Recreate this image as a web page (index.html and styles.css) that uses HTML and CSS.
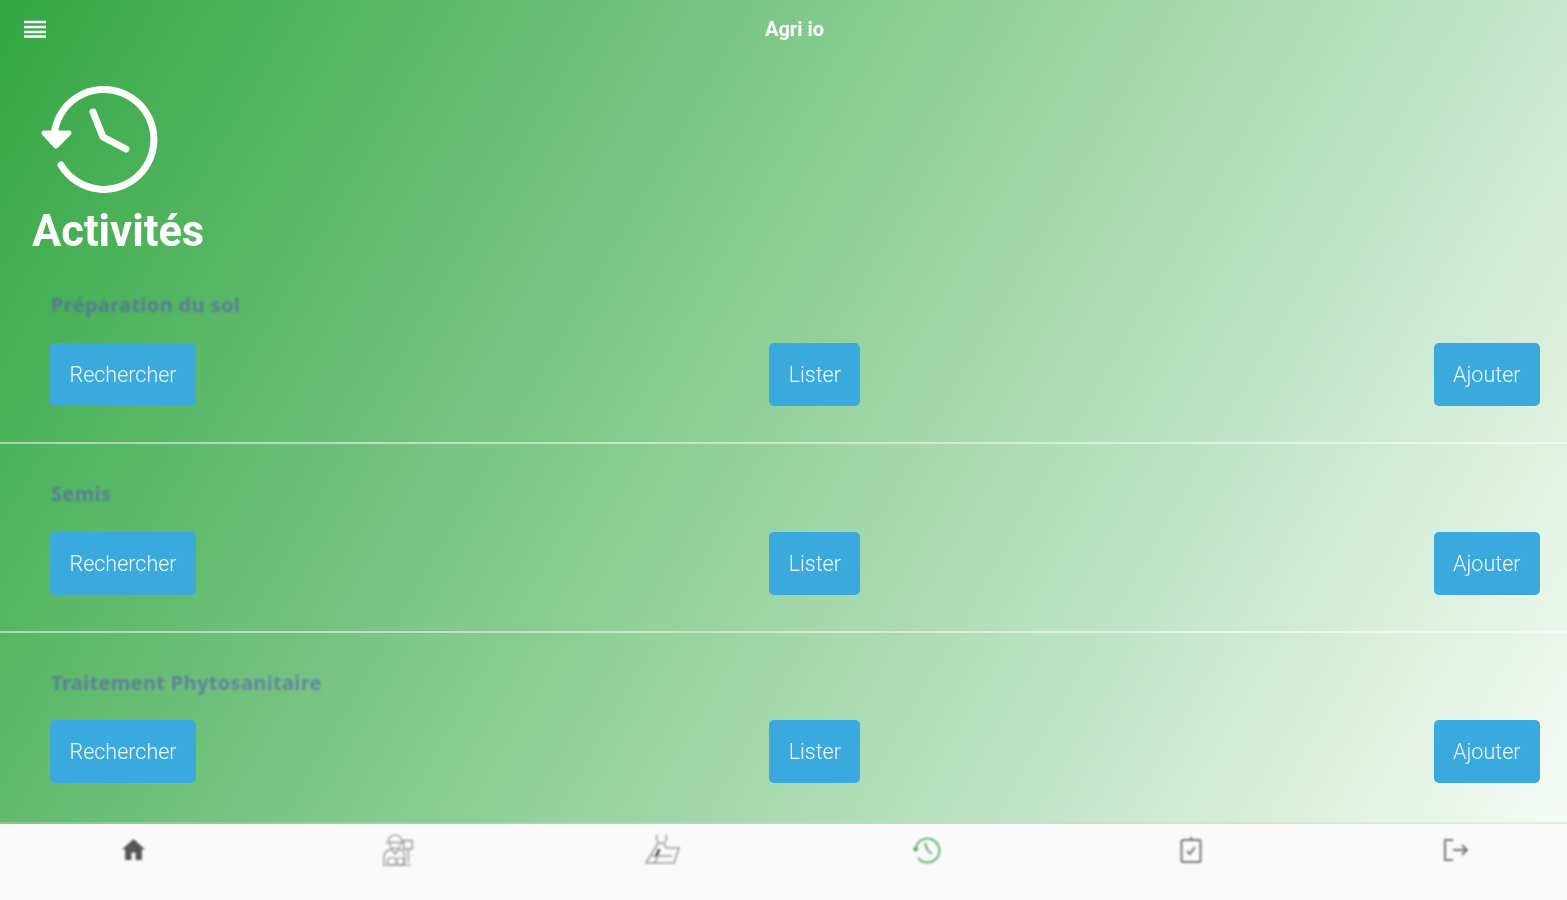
FILE: index.html
```html
<!DOCTYPE html>
<html lang="fr">

<head>
    <meta charset="UTF-8" />
    <title>Agri io</title>
    <link rel="stylesheet" href="styles.css">
</head>

<body>
    <main class="content">
        <header class="topbar">
            <svg class="menu-icon" viewBox="0 0 22 18" aria-hidden="true">
                <path d="M0 2h22M0 7h22M0 12h22M0 16.500h22" />
            </svg>
            <span class="app-title">Agri io</span>
        </header>

        <section class="hero">
            <svg class="hero-icon" viewBox="0 0 124 112" aria-hidden="true">
                <path d="M23 80A50 50 0 1 0 16 52" />
                <path class="arrow" d="M6 48L18 61L31 48Z" />
                <path d="M55 27L65 52L88 64" />
            </svg>
            <h1>Activités</h1>
        </section>

        <section class="activity">
            <h2>Préparation du sol</h2>
            <div class="actions">
                <button>Rechercher</button>
                <button>Lister</button>
                <button>Ajouter</button>
            </div>
        </section>
        <section class="activity">
            <h2>Semis</h2>
            <div class="actions">
                <button>Rechercher</button>
                <button>Lister</button>
                <button>Ajouter</button>
            </div>
        </section>
        <section class="activity last">
            <h2>Traitement Phytosanitaire</h2>
            <div class="actions">
                <button>Rechercher</button>
                <button>Lister</button>
                <button>Ajouter</button>
            </div>
        </section>
    </main>

    <nav class="tabbar">
        <!-- home -->
        <div class="tab">
            <svg class="home" viewBox="0 0 24 24" aria-hidden="true">
                <path d="M12 2L1 12h3v10h6v-7h4v7h6V12h3z" />
            </svg>
        </div>
        <!-- farmer -->
        <div class="tab">
            <svg class="farmer" viewBox="0 0 36 36" aria-hidden="true">
                <path d="M8 9c0-9 14-9 14 0M5 10h20M9 10c0 9 12 9 12 0" />
                <path d="M3 34v-8c0-5 4-8 8-9l4 5 4-5c3 1 5 2 6 4v13z" />
                <path d="M11 26a5 4 0 1 0 1 0M20 26a4 4 0 1 0 1 0" />
                <path d="M24 8h9v9h-9zM29 17v14M26 34h6" />
            </svg>
        </div>
        <!-- field -->
        <div class="tab">
            <svg class="field" viewBox="0 0 36 30" aria-hidden="true">
                <path d="M14 7a5 6 0 1 1 7 0" />
                <path d="M2 28L14 8h6l2 5h13l-5 15H2z" />
                <path d="M8 21h20M16 14l-5 14" />
                <path class="dark" d="M15 14l-3 7" />
            </svg>
        </div>
        <!-- history -->
        <div class="tab">
            <svg class="history" viewBox="0 0 30 30" aria-hidden="true">
                <path d="M6 23A12 12 0 1 0 3.500 14" />
                <path class="arrow" d="M0.500 13L3.500 17L7 13Z" />
                <path d="M13 8L15.500 15L20 19" />
            </svg>
        </div>
        <!-- clipboard -->
        <div class="tab">
            <svg class="clipboard" viewBox="0 0 24 28" aria-hidden="true">
                <path d="M4 4h16a1.500 1.500 0 0 1 1.500 1.500v19A1.500 1.500 0 0 1 20 26H4a1.500 1.500 0 0 1-1.500-1.500v-19A1.500 1.500 0 0 1 4 4z" />
                <path d="M8 4h8M12 1v3M8 15l3 3 5-7" />
            </svg>
        </div>
        <!-- logout -->
        <div class="tab">
            <svg class="logout" viewBox="0 0 28 24" aria-hidden="true">
                <path d="M11 2H3v20h8M11 12h14M20 7l5 5-5 5" />
            </svg>
        </div>
    </nav>
</body>

</html>
```

FILE: styles.css
```css
* {
    box-sizing: border-box;
    margin: 0;
    padding: 0;
}

body {
    width: 1567px;
    height: 900px;
    overflow: hidden;
    display: flex;
    flex-direction: column;
    font-family: Roboto, sans-serif;
    background-color: #fafafa;
}

.content {
    height: 824px;
    background: linear-gradient(120deg, #33a743 0%, #f6fbf6 100%);
    border-bottom: 2px solid rgba(255, 255, 255, 0.4);
}

.topbar {
    height: 57px;
    display: flex;
    align-items: center;
    padding-left: 24px;
}

.menu-icon {
    width: 22px;
    height: 18px;
    stroke: #fff;
    stroke-width: 2.400;
    fill: none;
    filter: blur(0.6px);
}

.app-title {
    margin-left: 719px;
    font-size: 20px;
    font-weight: 700;
    color: #fff;
    filter: blur(0.6px);
}

.hero {
    height: 197px;
    padding: 28px 0 0 32px;
}

.hero-icon {
    display: block;
    width: 124px;
    height: 112px;
    margin-left: 6px;
    fill: none;
    stroke: #fff;
    stroke-width: 7;
    stroke-linecap: round;
    stroke-linejoin: round;
    filter: blur(0.6px);
}

.hero-icon .arrow {
    fill: #fff;
    stroke-width: 5;
}

.hero h1 {
    margin-top: 10px;
    font-size: 43.500px;
    line-height: 50px;
    font-weight: 700;
    color: #fff;
    filter: blur(0.7px);
}

.activity {
    height: 189px;
    padding: 38px 27px 0 50px;
    border-bottom: 1px solid rgba(255, 255, 255, 0.5);
    box-shadow: 0 1px 0 rgba(255, 255, 255, 0.5);
}

.activity.last {
    padding-top: 37px;
    border-bottom: none;
    box-shadow: none;
}

.activity h2 {
    height: 26px;
    margin-bottom: 25px;
    padding-left: 1px;
    font-family: "Noto Sans", sans-serif;
    font-size: 20px;
    line-height: 26px;
    font-weight: 700;
    letter-spacing: 0.35px;
    color: rgba(88, 84, 190, 0.58);
    filter: blur(0.8px);
}

.activity.last h2 {
    padding-top: 1px;
    margin-bottom: 25px;
}

.actions {
    display: flex;
    justify-content: space-between;
}

.actions button {
    height: 63px;
    padding: 0 19.500px;
    border: none;
    border-radius: 5px;
    background-color: #3aa9dd;
    color: #f2fafd;
    font-family: Roboto, sans-serif;
    font-size: 21.500px;
    font-weight: 300;
    filter: blur(0.7px);
}

.tabbar {
    flex: 1;
    display: flex;
    justify-content: space-between;
    align-items: center;
    padding: 0 91px 25px 113px;
}

.tab {
    width: 40px;
    display: flex;
    justify-content: center;
    align-items: center;
}

.tab svg {
    filter: blur(0.8px);
    fill: none;
    stroke: #666;
    stroke-width: 2;
}

.tab .home {
    width: 25px;
    height: 25px;
    fill: #555;
    stroke: none;
}

.tab .farmer {
    width: 34px;
    height: 34px;
    stroke: #999;
    stroke-width: 1.500;
}

.tab .field {
    width: 36px;
    height: 30px;
    stroke: #999;
    stroke-width: 1.500;
}

.tab .field .dark {
    stroke: #444;
    stroke-width: 2;
}

.tab .history {
    width: 30px;
    height: 30px;
    stroke: #2fa544;
    stroke-width: 1.600;
}

.tab .history .arrow {
    fill: #2fa544;
    stroke: none;
}

.tab .clipboard {
    width: 24px;
    height: 28px;
    stroke: #777;
}

.tab .logout {
    width: 28px;
    height: 24px;
    stroke: #777;
}
```
